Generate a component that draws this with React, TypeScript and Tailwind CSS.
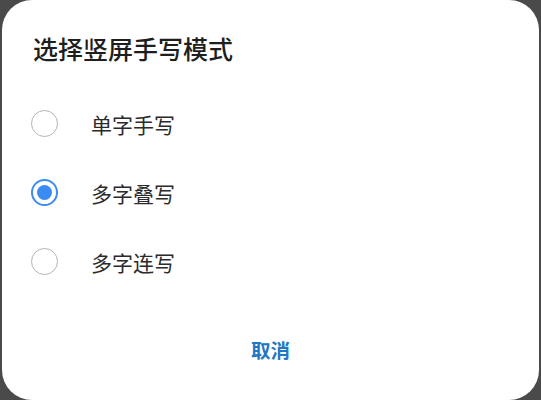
import React, { useState } from 'react';

const options = ['单字手写', '多字叠写', '多字连写'];

const Radio = ({ checked }: { checked: boolean }) => (
  <span
    className={
      checked
        ? 'flex h-[27px] w-[27px] items-center justify-center rounded-full border-2 border-[#3d8bf2]'
        : 'flex h-[27px] w-[27px] items-center justify-center rounded-full border-[1.5px] border-[#b3b3b3]'
    }
  >
    {checked && <span className="h-[15px] w-[15px] rounded-full bg-[#3a8cf2]" />}
  </span>
);

export default function App() {
  const [selected, setSelected] = useState(1);

  return (
    <div className="h-[400px] w-[541px] bg-[#4a4a4a] px-[2px] font-['Noto_Sans_CJK_SC',sans-serif]">
      <div className="flex h-full flex-col rounded-[30px] bg-white">
        <h1 className="pl-[31px] pt-[33px] text-[25px] font-medium leading-[30px] text-[#1e1e1e]">
          选择竖屏手写模式
        </h1>

        <div className="mt-[26px] flex flex-col">
          {options.map((label, i) => (
            <button
              key={label}
              onClick={() => setSelected(i)}
              className="flex h-[69px] items-center pl-[29px] text-left"
            >
              <Radio checked={selected === i} />
              <span className="ml-[33px] text-[21px] leading-[28px] text-[#2b2b2b]">{label}</span>
            </button>
          ))}
        </div>

        <div className="mt-[40px] flex justify-center">
          <button className="text-[19.5px] font-bold leading-[28px] text-[#2277c4]">取消</button>
        </div>
      </div>
    </div>
  );
}
